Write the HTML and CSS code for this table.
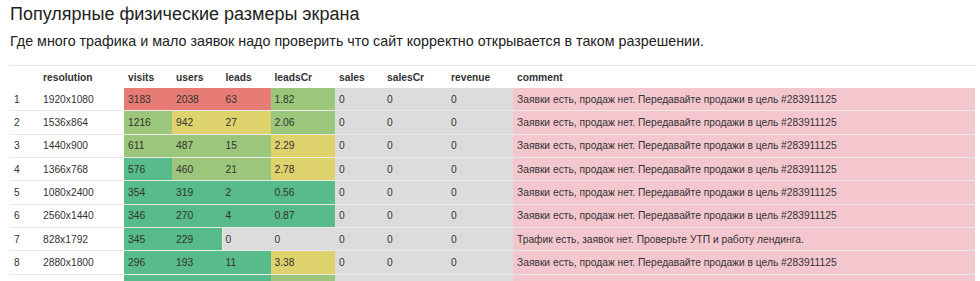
FILE: index.html
```html
<!DOCTYPE html>
<html lang="ru">
<head>
<meta charset="utf-8">
<title>Популярные физические размеры экрана</title>
<link rel="stylesheet" href="styles.css">
</head>
<body>
<div class="page">
  <h1 class="title">Популярные физические размеры экрана</h1>
  <p class="subtitle">Где много трафика и мало заявок надо проверить что сайт корректно открывается в таком разрешении.</p>
  <table class="grid">
    <colgroup>
      <col class="c-idx"><col class="c-res"><col class="c-vis"><col class="c-usr"><col class="c-lead"><col class="c-lcr"><col class="c-sal"><col class="c-scr"><col class="c-rev"><col class="c-com">
    </colgroup>
    <thead>
      <tr><th></th><th>resolution</th><th>visits</th><th>users</th><th>leads</th><th>leadsCr</th><th>sales</th><th>salesCr</th><th>revenue</th><th>comment</th></tr>
    </thead>
    <tbody>
      <tr><td>1</td><td>1920x1080</td><td class="red">3183</td><td class="red">2038</td><td class="red">63</td><td class="lg">1.82</td><td class="gr">0</td><td class="gr">0</td><td class="gr">0</td><td class="pk">Заявки есть, продаж нет. Передавайте продажи в цель #283911125</td></tr>
      <tr><td>2</td><td>1536x864</td><td class="lg">1216</td><td class="yl">942</td><td class="yl">27</td><td class="lg">2.06</td><td class="gr">0</td><td class="gr">0</td><td class="gr">0</td><td class="pk">Заявки есть, продаж нет. Передавайте продажи в цель #283911125</td></tr>
      <tr><td>3</td><td>1440x900</td><td class="lg">611</td><td class="lg">487</td><td class="lg">15</td><td class="yl">2.29</td><td class="gr">0</td><td class="gr">0</td><td class="gr">0</td><td class="pk">Заявки есть, продаж нет. Передавайте продажи в цель #283911125</td></tr>
      <tr><td>4</td><td>1366x768</td><td class="gn">576</td><td class="lg">460</td><td class="lg">21</td><td class="yl">2.78</td><td class="gr">0</td><td class="gr">0</td><td class="gr">0</td><td class="pk">Заявки есть, продаж нет. Передавайте продажи в цель #283911125</td></tr>
      <tr><td>5</td><td>1080x2400</td><td class="gn">354</td><td class="gn">319</td><td class="gn">2</td><td class="gn">0.56</td><td class="gr">0</td><td class="gr">0</td><td class="gr">0</td><td class="pk">Заявки есть, продаж нет. Передавайте продажи в цель #283911125</td></tr>
      <tr><td>6</td><td>2560x1440</td><td class="gn">346</td><td class="gn">270</td><td class="gn">4</td><td class="gn">0.87</td><td class="gr">0</td><td class="gr">0</td><td class="gr">0</td><td class="pk">Заявки есть, продаж нет. Передавайте продажи в цель #283911125</td></tr>
      <tr><td>7</td><td>828x1792</td><td class="gn">345</td><td class="gn">229</td><td class="gr edge">0</td><td class="gr">0</td><td class="gr">0</td><td class="gr">0</td><td class="gr">0</td><td class="pk">Трафик есть, заявок нет. Проверьте УТП и работу лендинга.</td></tr>
      <tr><td>8</td><td>2880x1800</td><td class="gn">296</td><td class="gn">193</td><td class="gn">11</td><td class="yl">3.38</td><td class="gr">0</td><td class="gr">0</td><td class="gr">0</td><td class="pk">Заявки есть, продаж нет. Передавайте продажи в цель #283911125</td></tr>
      <tr class="peek"><td></td><td></td><td class="gn"></td><td class="gn"></td><td class="gn"></td><td class="lg"></td><td class="gr"></td><td class="gr"></td><td class="gr"></td><td class="pk"></td></tr>
    </tbody>
  </table>
</div>
</body>
</html>
```
FILE: styles.css
```css
html, body {
  margin: 0;
  padding: 0;
  background: #ffffff;
}
body {
  font-family: "Liberation Sans", Arial, sans-serif;
  color: #333333;
}
.page {
  padding: 3px 5px 0 10px;
}
.title {
  margin: 0;
  font-size: 18px;
  font-weight: normal;
  line-height: 22px;
  color: #222222;
}
.subtitle {
  margin: 7px 0 0 0;
  font-size: 14.3px;
  line-height: 18px;
  color: #222222;
}
.grid {
  margin-top: 15px;
  width: 965px;
  table-layout: fixed;
  border-collapse: collapse;
  border-top: 1px solid #e6e6e6;
  font-size: 10.25px;
}
.c-idx { width: 29px; }
.c-res { width: 85px; }
.c-vis { width: 48px; }
.c-usr { width: 49.5px; }
.c-lead { width: 49px; }
.c-lcr { width: 64.5px; }
.c-sal { width: 48px; }
.c-scr { width: 64px; }
.c-rev { width: 66px; }
.c-com { width: 462px; }
.grid th {
  height: 22px;
  padding: 0 4px;
  text-align: left;
  font-weight: bold;
  color: #333333;
  white-space: nowrap;
}
.grid td {
  height: 22.33px;
  padding: 0 4px;
  border-bottom: 1px solid #e9e9e9;
  white-space: nowrap;
  overflow: hidden;
  color: #333333;
}
.red { background: #e67c73; }
.lg { background: #9bc67b; }
.yl { background: #ddd26c; }
.gn { background: #57bb8a; }
.gr { background: #dcdcdc; }
.pk { background: #f4c7ce; }
.edge { box-shadow: inset 1px 0 0 #eeeeee; }
```
